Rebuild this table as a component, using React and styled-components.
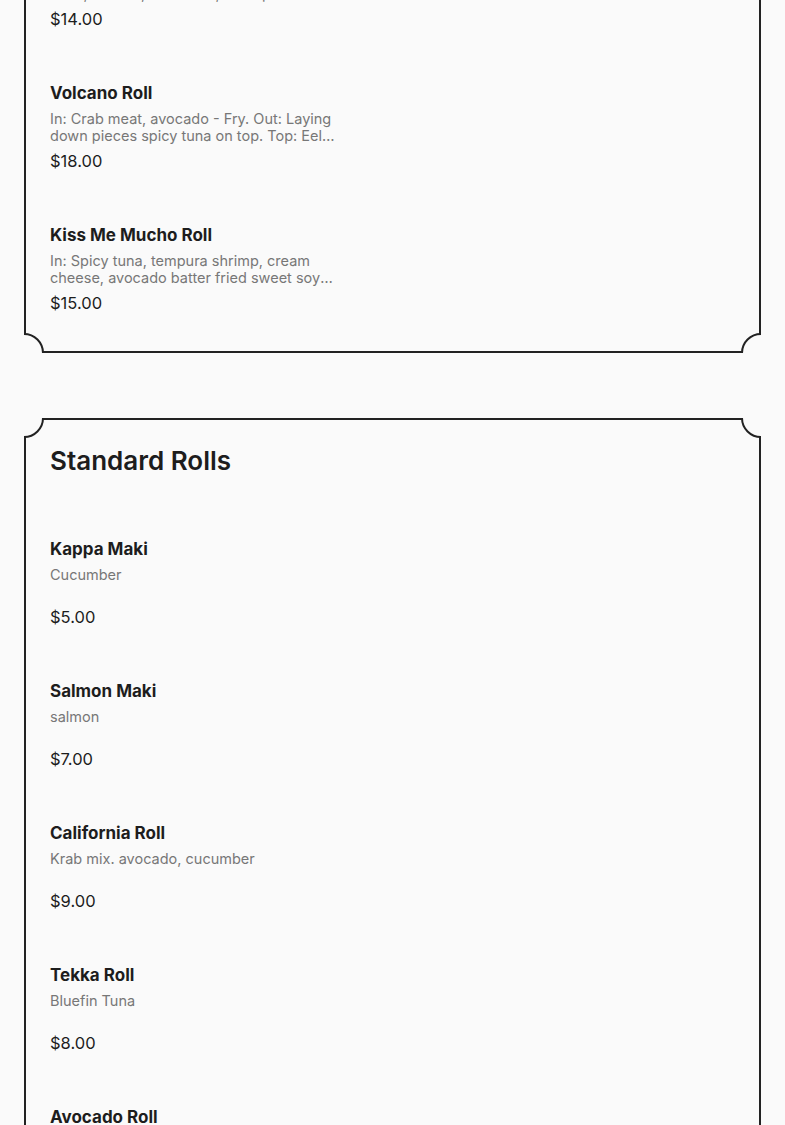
import React from 'react';
import styled, { createGlobalStyle } from 'styled-components';

const GlobalStyle = createGlobalStyle`
  body {
    margin: 0;
    background: #fafafa;
    font-family: Inter, "DejaVu Sans", sans-serif;
    color: #1d1d1d;
  }
`;

const menu = [
    {
        title: 'Special Rolls',
        items: [
            { name: 'Rainbow Roll', desc: 'In: Crab meat, cucumber, avocado. Out: Tuna, salmon, white fish, shrimp and avocado on top', price: '$14.00' },
            { name: 'Volcano Roll', desc: 'In: Crab meat, avocado - Fry. Out: Laying down pieces spicy tuna on top. Top: Eel sauce, spicy mayo', price: '$18.00' },
            { name: 'Kiss Me Mucho Roll', desc: 'In: Spicy tuna, tempura shrimp, cream cheese, avocado batter fried sweet soy paper. Top: Eel sauce', price: '$15.00' },
        ],
    },
    {
        title: 'Standard Rolls',
        items: [
            { name: 'Kappa Maki', desc: 'Cucumber', price: '$5.00' },
            { name: 'Salmon Maki', desc: 'salmon', price: '$7.00' },
            { name: 'California Roll', desc: 'Krab mix. avocado, cucumber', price: '$9.00' },
            { name: 'Tekka Roll', desc: 'Bluefin Tuna', price: '$8.00' },
            { name: 'Avocado Roll', desc: 'Avocado', price: '$5.00' },
        ],
    },
];

function App() {
    return (
        <>
            <GlobalStyle />
            <Page>
                {menu.map((section) => (
                    <Frame key={section.title}>
                        <Card>
                            <SectionTitle>{section.title}</SectionTitle>
                            <ItemList>
                                {section.items.map((item) => (
                                    <Item key={item.name}>
                                        <ItemName>{item.name}</ItemName>
                                        <ItemDesc>{item.desc}</ItemDesc>
                                        <ItemPrice>{item.price}</ItemPrice>
                                    </Item>
                                ))}
                            </ItemList>
                        </Card>
                        <Notch $top $left />
                        <Notch $top />
                        <Notch $left />
                        <Notch />
                    </Frame>
                ))}
            </Page>
        </>
    );
}

const Page = styled.div`
    display: flex;
    flex-direction: column;
    gap: 65px;
    padding: 0 24px 40px;
    margin-top: -180px;
`;

const Frame = styled.section`
    position: relative;
    overflow: hidden;
`;

const Card = styled.div`
    border: 2px solid #222;
    padding: 25px 24px 38px;
`;

const Notch = styled.span`
    position: absolute;
    width: 40px;
    height: 40px;
    box-sizing: border-box;
    border-radius: 50%;
    border: 2px solid #222;
    background: #fafafa;
    ${(p) => (p.$top ? 'top: -20px;' : 'bottom: -20px;')}
    ${(p) => (p.$left ? 'left: -20px;' : 'right: -20px;')}
`;

const SectionTitle = styled.h2`
    margin: 0 0 62px;
    font-size: 26px;
    line-height: 32px;
    font-weight: 600;
    color: #1d1d1d;
`;

const ItemList = styled.div`
    display: flex;
    flex-direction: column;
    gap: 54px;
`;

const Item = styled.div`
    display: flex;
    flex-direction: column;
`;

const ItemName = styled.h3`
    margin: 0;
    font-size: 17px;
    line-height: 20px;
    font-weight: 700;
    color: #1d1d1d;
`;

const ItemDesc = styled.p`
    margin: 6.5px 0 0;
    width: 292px;
    height: 34px;
    font-size: 14.5px;
    line-height: 17px;
    color: #777;
    display: -webkit-box;
    -webkit-line-clamp: 2;
    -webkit-box-orient: vertical;
    overflow: hidden;
`;

const ItemPrice = styled.div`
    margin-top: 7.5px;
    font-size: 16.5px;
    line-height: 20px;
    color: #1d1d1d;
`;

export default App;
